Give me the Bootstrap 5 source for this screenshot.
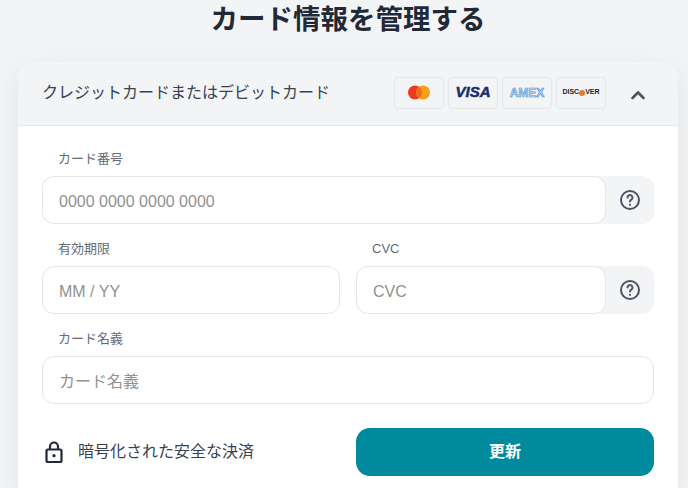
<!DOCTYPE html>
<html lang="ja">

<head>
	<meta charset="utf-8">
	<meta name="viewport" content="width=device-width, initial-scale=1">
	<title>カード情報を管理する</title>
	<link href="https://cdn.jsdelivr.net/npm/bootstrap@5.3.5/dist/css/bootstrap.min.css" rel="stylesheet">
	<style>
		html, body { height: 488px; overflow: hidden; }
		body {
			background: #f3f4f6;
			color: #374151;
			font-family: "Liberation Sans", "Noto Sans CJK JP", sans-serif;
		}
		.page-wrap { width: 696px; }
		.page-title {
			margin: 0;
			height: 62px;
			padding-top: 2px;
			line-height: 36px;
			font-size: 27.5px;
			font-weight: 700;
			color: #1f2937;
			text-align: center;
		}
		.pay-panel {
			margin: 0 18px;
			background: #fff;
			border-radius: 16px 16px 0 0;
			box-shadow: 0 8px 30px rgba(0, 0, 0, .07);
			height: 426px;
		}
		.pay-head {
			height: 64px;
			padding: 0 24px 2px;
			background: #f3f4f6;
			border-bottom: 1px solid #e5e7eb;
			border-radius: 16px 16px 0 0;
			font-size: 16px;
		}
		.brand-box {
			width: 50px;
			height: 32px;
			background: #f3f4f6;
			border: 1px solid #e5e7eb;
			border-radius: 4px;
		}
		.brand-visa { font-style: italic; font-weight: 700; font-size: 15px; color: #1a2a6c; -webkit-text-stroke: .5px #1a2a6c; }
		.brand-amex { font-weight: 700; font-size: 12px; color: #bcd9f2; -webkit-text-stroke: .6px #4f97d9; }
		.brand-disc { font-weight: 700; font-size: 7px; color: #222; }
		.brand-disc i { display: inline-block; width: 6px; height: 6px; border-radius: 50%; background: #e8792b; }
		.chev-slot { width: 48px; padding-left: 24px; }
		.pay-body { padding: 23px 24px 0; }
		.fld-label {
			display: block;
			margin: 0 0 9px 16px;
			height: 18px;
			padding-top: 1px;
			line-height: 18px;
			font-size: 13px;
			color: #666b75;
		}
		.fld-input {
			display: block;
			width: 100%;
			height: 48px;
			padding: 3px 16px 0;
			font-size: 16px;
			color: #374151;
			background: #fff;
			border: 1px solid #e5e7eb;
			border-radius: 12px;
			outline: 0;
		}
		.fld-input::placeholder { color: #919191; opacity: 1; }
		.fld-group { background: #f3f4f6; border-radius: 12px; }
		.fld-group .fld-input { flex: 1 1 0; min-width: 0; }
		.fld-help { width: 48px; flex: none; }
		.fld-row { margin-bottom: 15px; }
		.fld-half { flex: 1 1 0; min-width: 0; }
		.pay-foot { margin-top: 24px; height: 48px; }
		.secure-note { font-size: 16px; width: 314px; }
		.btn-update {
			flex: 1 1 0;
			height: 48px;
			background: #008a9e;
			border: 0;
			border-radius: 14px;
			color: #fff;
			font-size: 16px;
			font-weight: 700;
		}
	</style>
</head>

<body>
	<div class="page-wrap">
		<h1 class="page-title">カード情報を管理する</h1>

		<div class="pay-panel">
			<div class="pay-head d-flex align-items-center">
				<span class="flex-grow-1">クレジットカードまたはデビットカード</span>
				<div class="d-flex gap-1">
					<div class="brand-box d-flex align-items-center justify-content-center">
						<svg width="24" height="15" viewBox="0 0 24 15">
							<circle cx="8" cy="7.5" r="7" fill="#eb3b1e"/>
							<circle cx="16" cy="7.5" r="7" fill="#f79e1b"/>
							<path d="M12 1.8a7 7 0 0 1 0 11.4a7 7 0 0 1 0-11.4z" fill="#f26a1b"/>
						</svg>
					</div>
					<div class="brand-box d-flex align-items-center justify-content-center brand-visa">VISA</div>
					<div class="brand-box d-flex align-items-center justify-content-center brand-amex">AMEX</div>
					<div class="brand-box d-flex align-items-center justify-content-center brand-disc">DISC<i></i>VER</div>
				</div>
				<div class="chev-slot d-flex">
					<svg class="flex-shrink-0 mt-1" width="16" height="16" viewBox="0 0 16 16" fill="none" stroke="#4b5563" stroke-width="2.6" stroke-linecap="round" stroke-linejoin="round">
						<path d="M2.5 11l5.5-5.5 5.5 5.5"/>
					</svg>
				</div>
			</div>

			<div class="pay-body">
				<div class="fld-row">
					<label class="fld-label">カード番号</label>
					<div class="fld-group d-flex">
						<input class="fld-input" placeholder="0000 0000 0000 0000">
						<div class="fld-help d-flex align-items-center justify-content-center">
							<svg width="24" height="24" viewBox="0 0 24 24" fill="none" stroke="#4b5563" stroke-width="2" stroke-linecap="round">
								<circle cx="12" cy="12" r="9"/>
								<path d="M9.5 9.5a2.5 2.5 0 1 1 3.8 2.1c-.8.5-1.3 1-1.3 1.9"/>
								<path d="M12 16.8v.1"/>
							</svg>
						</div>
					</div>
				</div>

				<div class="fld-row d-flex gap-3">
					<div class="fld-half">
						<label class="fld-label">有効期限</label>
						<input class="fld-input" placeholder="MM / YY">
					</div>
					<div class="fld-half">
						<label class="fld-label">CVC</label>
						<div class="fld-group d-flex">
							<input class="fld-input" placeholder="CVC">
							<div class="fld-help d-flex align-items-center justify-content-center">
								<svg width="24" height="24" viewBox="0 0 24 24" fill="none" stroke="#4b5563" stroke-width="2" stroke-linecap="round">
									<circle cx="12" cy="12" r="9"/>
									<path d="M9.5 9.5a2.5 2.5 0 1 1 3.8 2.1c-.8.5-1.3 1-1.3 1.9"/>
									<path d="M12 16.8v.1"/>
								</svg>
							</div>
						</div>
					</div>
				</div>

				<div>
					<label class="fld-label">カード名義</label>
					<input class="fld-input" placeholder="カード名義">
				</div>

				<div class="pay-foot d-flex align-items-center">
					<div class="secure-note d-flex align-items-center gap-2">
						<svg width="24" height="24" viewBox="0 0 24 24" fill="none" stroke="#1f2937" stroke-width="2.2">
							<rect x="4.5" y="9.5" width="15" height="12.5" rx="1.5"/>
							<path d="M8 9.5V6.5a4 4 0 0 1 8 0v3"/>
							<circle cx="12" cy="15.7" r="1.6" fill="#1f2937" stroke="none"/>
						</svg>
						<span class="ps-1">暗号化された安全な決済</span>
					</div>
					<button class="btn-update">更新</button>
				</div>
			</div>
		</div>
	</div>
</body>

</html>
